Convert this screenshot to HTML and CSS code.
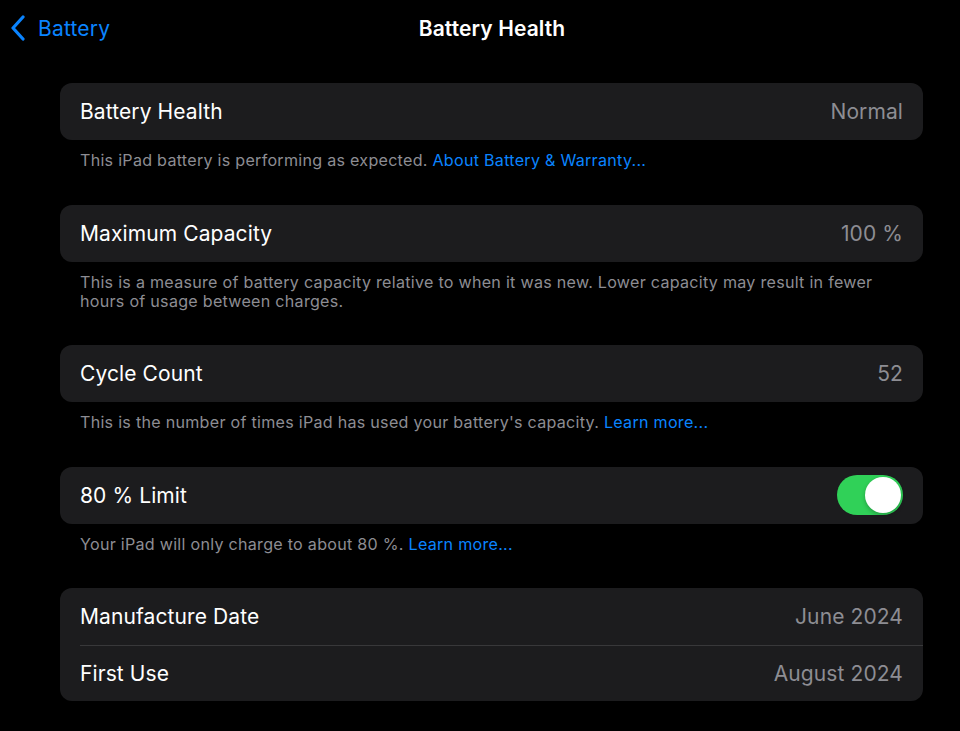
FILE: index.html
```html
<!DOCTYPE html>
<html lang="en">

<head>
    <meta charset="UTF-8">
    <meta name="viewport" content="width=device-width, initial-scale=1.0">
    <title>Battery Health</title>
    <link rel="stylesheet" href="styles.css">
</head>

<body>

    <header class="navBar">
        <a class="backLink" href="#">
            <svg class="chevron" width="16" height="26" viewBox="0 0 16 26">
                <path d="M13 2 L3 13 L13 24" fill="none" stroke="#0a84ff" stroke-width="3.2"
                    stroke-linecap="round" stroke-linejoin="round" />
            </svg>
            <span>Battery</span>
        </a>
        <h1 class="navTitle">Battery Health</h1>
        <div></div>
    </header>

    <main class="content">
        <!-- Battery health -->
        <section class="group">
            <div class="card">
                <div class="row">
                    <span class="label">Battery Health</span>
                    <span class="value">Normal</span>
                </div>
            </div>
            <p class="footnote">This iPad battery is performing as expected. <a href="#">About Battery &amp; Warranty...</a></p>
        </section>

        <!-- Maximum capacity -->
        <section class="group">
            <div class="card">
                <div class="row">
                    <span class="label">Maximum Capacity</span>
                    <span class="value">100 %</span>
                </div>
            </div>
            <p class="footnote">This is a measure of battery capacity relative to when it was new. Lower capacity may result in fewer hours of usage between charges.</p>
        </section>

        <!-- Cycle count -->
        <section class="group">
            <div class="card">
                <div class="row">
                    <span class="label">Cycle Count</span>
                    <span class="value">52</span>
                </div>
            </div>
            <p class="footnote">This is the number of times iPad has used your battery's capacity. <a href="#">Learn more...</a></p>
        </section>

        <!-- 80 % limit -->
        <section class="group">
            <div class="card">
                <div class="row">
                    <span class="label">80 % Limit</span>
                    <span class="toggle on"><span class="knob"></span></span>
                </div>
            </div>
            <p class="footnote">Your iPad will only charge to about 80 %. <a href="#">Learn more...</a></p>
        </section>

        <!-- Dates -->
        <section class="group">
            <div class="card">
                <div class="row">
                    <span class="label">Manufacture Date</span>
                    <span class="value">June 2024</span>
                </div>
                <div class="row">
                    <span class="label">First Use</span>
                    <span class="value">August 2024</span>
                </div>
            </div>
        </section>
    </main>

</body>

</html>
```

FILE: styles.css
```css
body {
    margin: 0;
    background-color: #000000;
    color: #ffffff;
    font-family: 'Inter', 'Noto Sans', sans-serif;
    -webkit-font-smoothing: antialiased;
}

.navBar {
    display: grid;
    grid-template-columns: 1fr auto 1fr;
    align-items: center;
    height: 56px;
    padding-left: 24px;
}

.backLink {
    display: flex;
    align-items: center;
    gap: 12px;
    margin-left: -14px;
    color: #0a84ff; /* azul iOS */
    text-decoration: none;
    font-size: 21px;
    letter-spacing: 0.2px;
}

.chevron {
    display: block;
}

.navTitle {
    margin: 0;
    font-size: 21px;
    font-weight: 600;
    letter-spacing: 0.1px;
}

.content {
    padding: 27px 37px 0 60px;
}

.group {
    margin-bottom: 34.5px;
}

.card {
    background-color: #1c1c1e;
    border-radius: 12px;
}

.row {
    display: flex;
    align-items: center;
    justify-content: space-between;
    height: 57px;
    padding: 0 20px;
    position: relative;
}

.row + .row {
    height: 56px;
}

.row + .row::before {
    content: '';
    position: absolute;
    top: 0;
    left: 20px;
    right: 0;
    height: 1px;
    background-color: #38383a; /* separador */
}

.label {
    font-size: 21px;
    letter-spacing: 0.1px;
}

.value {
    font-size: 21px;
    color: #8d8d93;
    letter-spacing: 0.1px;
}

.footnote {
    margin: 11px 0 0;
    padding: 0 20px;
    font-size: 16.1px;
    line-height: 19px;
    color: #8d8d93;
    letter-spacing: 0.27px;
}

.footnote a {
    color: #0a84ff;
    text-decoration: none;
}

.toggle {
    display: flex;
    align-items: center;
    width: 66px;
    height: 40px;
    border-radius: 20px;
    background-color: #39393d;
    padding: 2px;
    box-sizing: border-box;
}

.toggle.on {
    background-color: #30d158; /* verde */
    justify-content: flex-end;
}

.knob {
    width: 36px;
    height: 36px;
    border-radius: 50%;
    background-color: #ffffff;
    box-shadow: 0 2px 4px rgba(0, 0, 0, 0.25);
}
```
